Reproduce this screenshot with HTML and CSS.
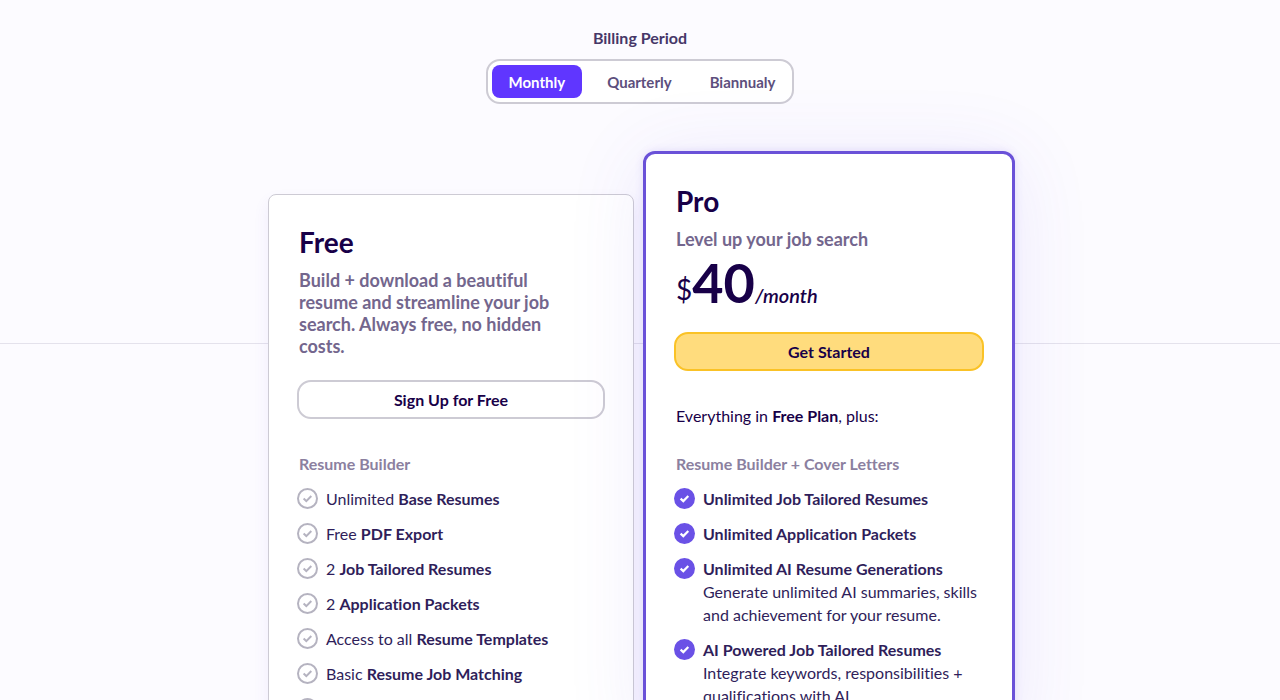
FILE: index.html
```html
<!DOCTYPE html>
<html lang="en">
<head>
<meta charset="utf-8">
<meta name="viewport" content="width=device-width, initial-scale=1">
<title>Pricing</title>
<link rel="stylesheet" href="styles.css">
</head>
<body>
<svg class="sprite" aria-hidden="true">
  <symbol id="check-outline" viewBox="0 0 21 21">
    <circle cx="10.5" cy="10.5" r="9.5" fill="none" stroke="#b5b3c0" stroke-width="2"/>
    <path d="M6.6 10.6l2.7 2.5 5-5.1" fill="none" stroke="#b5b3c0" stroke-width="2"/>
  </symbol>
  <symbol id="check-solid" viewBox="0 0 21 21">
    <circle cx="10.5" cy="10.5" r="10.5" fill="#6a51e6"/>
    <path d="M6.6 10.6l2.7 2.5 5-5.1" fill="none" stroke="#fff" stroke-width="2.2"/>
  </symbol>
</svg>
<main class="page">
  <fieldset class="billing">
    <legend class="billing-label">Billing Period</legend>
    <div class="segments">
      <label class="segment"><input type="radio" name="period" checked><span>Monthly</span></label>
      <label class="segment"><input type="radio" name="period"><span>Quarterly</span></label>
      <label class="segment"><input type="radio" name="period"><span>Biannualy</span></label>
    </div>
  </fieldset>
  <div class="plans">
    <section class="card">
      <h2 class="card-title">Free</h2>
      <p class="card-text">Build + download a beautiful resume and streamline your job search. Always free, no hidden costs.</p>
      <button class="button" type="button">Sign Up for Free</button>
      <h3 class="group">Resume Builder</h3>
      <ul class="features">
        <li><svg class="check"><use href="#check-outline"/></svg><span>Unlimited <b>Base Resumes</b></span></li>
        <li><svg class="check"><use href="#check-outline"/></svg><span>Free <b>PDF Export</b></span></li>
        <li><svg class="check"><use href="#check-outline"/></svg><span>2 <b>Job Tailored Resumes</b></span></li>
        <li><svg class="check"><use href="#check-outline"/></svg><span>2 <b>Application Packets</b></span></li>
        <li><svg class="check"><use href="#check-outline"/></svg><span>Access to all <b>Resume Templates</b></span></li>
        <li><svg class="check"><use href="#check-outline"/></svg><span>Basic <b>Resume Job Matching</b></span></li>
        <li><svg class="check"><use href="#check-outline"/></svg></li>
      </ul>
    </section>
    <section class="card card-pro">
      <h2 class="card-title">Pro</h2>
      <p class="card-text">Level up your job search</p>
      <p class="price"><span class="currency">$</span><strong class="amount">40</strong><em class="term">/month</em></p>
      <button class="button button-primary" type="button">Get Started</button>
      <p class="includes">Everything in <b>Free Plan</b>, plus:</p>
      <h3 class="group">Resume Builder + Cover Letters</h3>
      <ul class="features">
        <li><svg class="check"><use href="#check-solid"/></svg><b>Unlimited Job Tailored Resumes</b></li>
        <li><svg class="check"><use href="#check-solid"/></svg><b>Unlimited Application Packets</b></li>
        <li><svg class="check"><use href="#check-solid"/></svg><div><b>Unlimited AI Resume Generations</b><p class="detail">Generate unlimited AI summaries, skills and achievement for your resume.</p></div></li>
        <li><svg class="check"><use href="#check-solid"/></svg><div><b>AI Powered Job Tailored Resumes</b><p class="detail">Integrate keywords, responsibilities + qualifications with AI</p></div></li>
      </ul>
    </section>
  </div>
</main>
</body>
</html>
```
FILE: styles.css
```css
* { box-sizing: border-box; }
html { height: 100%; overflow: hidden; }
body {
  margin: 0;
  height: 100%;
  overflow: hidden;
  background: #fcfbff;
  color: #180048;
  font: 16px/23px Lato, sans-serif;
  font-variant-ligatures: none;
}
h2, h3, p, ul { margin: 0; padding: 0; }
b { font-weight: 700; }
.sprite { display: none; }
.page {
  padding: 26px 16px 0;
  background: linear-gradient(#e4e2ec, #e4e2ec) 0 343px / 100% 1px no-repeat;
}
.billing {
  display: flex;
  flex-direction: column;
  align-items: center;
  margin: 0;
  padding: 0;
  border: 0;
}
.billing-label {
  margin: 0 auto;
  padding: 0 0 10px;
  color: #463768;
  font-weight: 700;
}
.segments {
  display: flex;
  gap: 12px;
  padding: 4px;
  border: 2px solid #cdcbd4;
  border-radius: 14px;
  background: #fff;
}
.segment { position: relative; cursor: pointer; }
.segment input { position: absolute; inset: 0; margin: 0; opacity: 0; }
.segment span {
  display: block;
  padding: 6px 13px 4px;
  border-radius: 8px;
  color: #5d4f7d;
  font-size: 15px;
  font-weight: 700;
}
.segment input:checked + span { padding: 6px 17px 4px; background: #6036ff; color: #fff; }
.plans {
  display: flex;
  justify-content: center;
  align-items: flex-start;
  gap: 9px;
  margin-top: 47px;
  padding-left: 3px;
}
.card {
  flex: 0 1 366px;
  margin-top: 43px;
  padding: 30px 28px;
  border: 1px solid #cdcbd4;
  border-radius: 8px;
  background: #fff;
  box-shadow: 0 8px 16px rgba(100, 70, 230, 0.08);
}
.card-pro {
  flex-basis: 372px;
  margin-top: 0;
  border: 3px solid #6a51d8;
  border-radius: 12px;
  box-shadow: 0 0 8px rgba(100, 70, 230, 0.14), 0 8px 80px rgba(100, 70, 230, 0.1);
}
.card-title, .card-text, .price, .includes, .group { padding: 0 2px; }
.card-title { font-size: 28px; line-height: 34px; font-weight: 700; }
.card-text {
  max-width: 264px;
  margin-top: 10px;
  color: #73668d;
  font-size: 18px;
  line-height: 22px;
  font-weight: 700;
}
.price { display: flex; align-items: baseline; line-height: 24px; }
.currency { align-self: flex-end; font-size: 28px; line-height: 54px; }
.amount { font-size: 54px; font-weight: 700; line-height: 66px; }
.term { font-size: 20px; font-weight: 600; }
.button {
  display: block;
  width: 100%;
  margin-top: 23px;
  padding: 6px 16px;
  border: 2px solid #cdcbd4;
  border-radius: 14px;
  background: #fff;
  color: #180048;
  font: 700 16px/23px Lato, sans-serif;
  cursor: pointer;
}
.button-primary { margin-top: 16px; border-color: #fac226; background: #ffdc7d; }
.includes { margin-top: 33px; }
.group { margin-top: 33px; color: #8b809f; font-size: 16px; line-height: 23px; font-weight: 700; }
.includes + .group { margin-top: 25px; }
.features {
  display: grid;
  gap: 12px;
  margin-top: 12px;
  color: #2f1e5a;
  list-style: none;
}
.features li { display: flex; gap: 8px; }
.check { flex: none; width: 21px; height: 21px; margin-top: 1px; }
```
